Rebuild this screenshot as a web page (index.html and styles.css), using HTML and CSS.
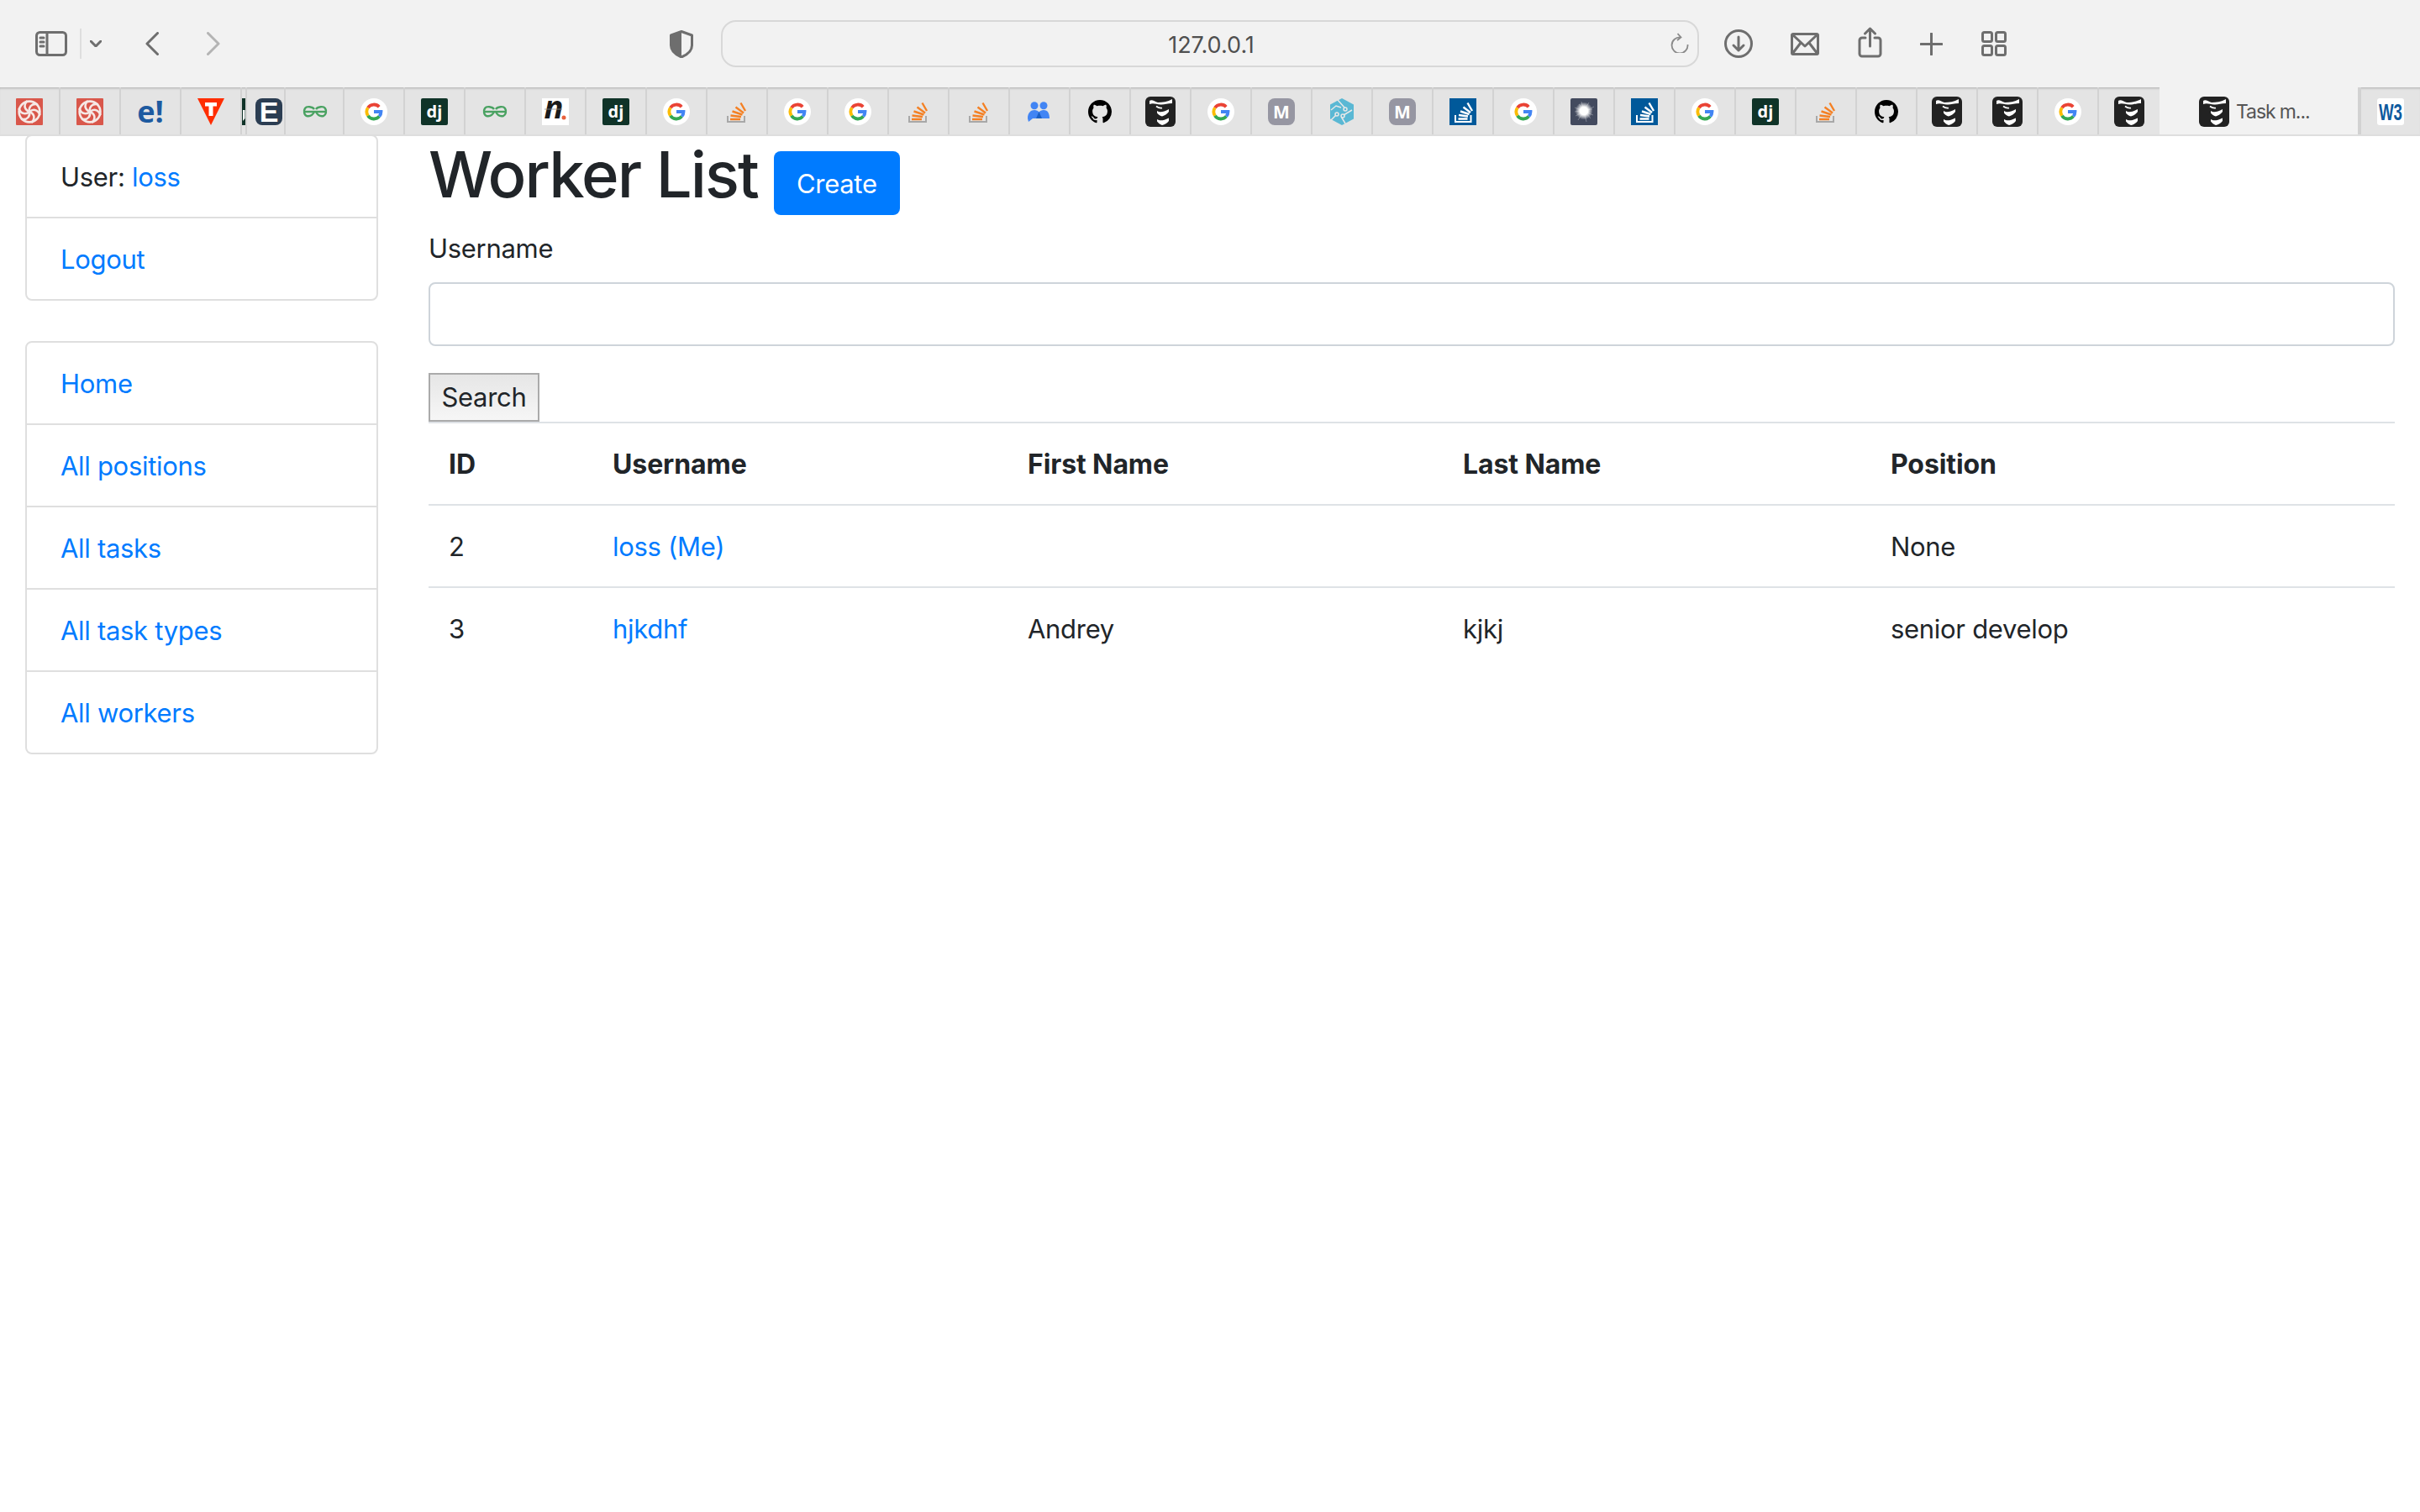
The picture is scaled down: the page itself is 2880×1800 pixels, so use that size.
FILE: index.html
```html
<!DOCTYPE html>
<html lang="en">
<head>
    <meta charset="UTF-8">
    <title>Worker List</title>
    <link rel="stylesheet" href="styles.css">
</head>
<body>
    <svg class="sprites" width="0" height="0">
        <symbol id="f-swirl" viewBox="0 0 32 32">
            <rect width="32" height="32" rx="1" fill="#d9574b"/>
            <g fill="none" stroke="#f6e9e6" stroke-width="2.600" stroke-linecap="round">
                <circle cx="16" cy="16" r="12.400"/>
                <path d="M16 16C15 11 18 6 25 7"/>
                <path d="M16 16C15 11 18 6 25 7" transform="rotate(60 16 16)"/>
                <path d="M16 16C15 11 18 6 25 7" transform="rotate(120 16 16)"/>
                <path d="M16 16C15 11 18 6 25 7" transform="rotate(180 16 16)"/>
                <path d="M16 16C15 11 18 6 25 7" transform="rotate(240 16 16)"/>
                <path d="M16 16C15 11 18 6 25 7" transform="rotate(300 16 16)"/>
            </g>
        </symbol>
        <symbol id="f-t" viewBox="0 0 32 32">
            <path d="M0 0H32L16 32Z" fill="#ff2d00"/>
            <path d="M9 5H23V9.500H18.500V21H13.500V9.500H9Z" fill="#fff"/>
        </symbol>
        <symbol id="f-gfg" viewBox="0 0 32 32">
            <g fill="none" stroke="#4aa262" stroke-width="2.400">
                <path d="M2 16H30"/>
                <path d="M15 13C13 10 6 9 4 12C2 15 3 20 6 21C10 22 13 20 15 16"/>
                <path d="M17 13C19 10 26 9 28 12C30 15 29 20 26 21C22 22 19 20 17 16"/>
            </g>
        </symbol>
        <symbol id="f-g" viewBox="0 0 32 32">
            <circle cx="16" cy="16" r="16" fill="#fff"/>
            <g fill="none" stroke-width="3.800">
                <path d="M22.200 10.200A8.500 8.500 0 0 0 8.900 11.300" stroke="#ea4335"/>
                <path d="M8.900 11.300A8.500 8.500 0 0 0 8.900 20.700" stroke="#fbbc05"/>
                <path d="M8.900 20.700A8.500 8.500 0 0 0 22.400 21.600" stroke="#34a853"/>
                <path d="M22.400 21.600A8.500 8.500 0 0 0 24.500 16H16" stroke="#4285f4"/>
            </g>
        </symbol>
        <symbol id="f-so" viewBox="0 0 32 32">
            <path d="M5 21V28H25V21" fill="none" stroke="#a8a8a8" stroke-width="2"/>
            <path d="M8 25H20M8.500 20.500L21 22M10.500 15.500L22.500 19.500M14.500 10.500L24 17.500M20.500 5.500L26 15" fill="none" stroke="#f48024" stroke-width="2.400"/>
        </symbol>
        <symbol id="f-sob" viewBox="0 0 32 32">
            <rect width="32" height="32" fill="#00599a"/>
            <path d="M7 20V28H25.500V20" fill="none" stroke="#fff" stroke-width="2"/>
            <path d="M10.500 24.500H21.500M11 20L22 21.500M13 15.500L23.500 19M16.500 10.500L25 17M21.500 5.500L27 15" fill="none" stroke="#fff" stroke-width="2.400"/>
        </symbol>
        <symbol id="f-people" viewBox="0 0 32 32">
            <circle cx="10" cy="8.700" r="4.500" fill="#4285f4"/>
            <circle cx="21" cy="8.700" r="4.500" fill="#4285f4"/>
            <path d="M2 24C2 17 6 14 10 14C12.500 14 14.500 15 15.500 16.500C16.500 15 18.500 14 21 14C26 14 28 18 28 24H8L3 28Z" fill="#4285f4"/>
            <path d="M15.500 16L19 24H12Z" fill="#1a5fc4"/>
        </symbol>
        <symbol id="f-gh" viewBox="0 0 32 32">
            <path transform="translate(2 2) scale(1.750)" d="M8 0C3.580 0 0 3.580 0 8c0 3.540 2.290 6.530 5.470 7.590.4.070.55-.17.55-.38 0-.19-.01-.82-.01-1.490-2.010.37-2.530-.49-2.690-.94-.09-.23-.48-.94-.82-1.130-.28-.15-.68-.52-.01-.53.630-.01 1.080.58 1.230.82.720 1.210 1.870.87 2.330.66.070-.52.280-.87.510-1.070-1.780-.2-3.640-.89-3.640-3.950 0-.87.310-1.590.820-2.150-.08-.2-.36-1.020.080-2.120 0 0 .67-.21 2.200.82.640-.18 1.320-.27 2-.27.680 0 1.360.09 2 .27 1.530-1.040 2.200-.82 2.200-.82.440 1.100.160 1.920.080 2.120.510.56.820 1.270.820 2.150 0 3.070-1.870 3.750-3.650 3.950.29.25.54.73.54 1.480 0 1.070-.01 1.930-.01 2.200 0 .21.150.46.550.38A8.013 8.013 0 0 0 16 8c0-4.420-3.580-8-8-8z"/>
        </symbol>
        <symbol id="f-wave" viewBox="0 0 36 36">
            <rect width="36" height="36" rx="6" fill="#222"/>
            <path d="M5 5C8 3 11 6 15 7C20 7 27 6 32 3V8C26 8 22 10 18 9.500C13 9 9 7 5 9Z" fill="#fff"/>
            <path d="M13 11.500C15 13 18 14 20 13.500" fill="none" stroke="#fff" stroke-width="1.800"/>
            <path d="M14 17C17 19 21 19 28 15V18C26 21 22 23 20 23.500C18 23 15 21 14 19.500Z" fill="#fff"/>
            <path d="M14 27C17 29 21 29 28 25.500V29C26 32 22 33.500 20 34C18 33.500 15 31 14 29.500Z" fill="#fff"/>
        </symbol>
        <symbol id="f-hex" viewBox="0 0 32 32">
            <path d="M16 0L30 7.500V24.500L16 32L2 24.500V7.500Z" fill="#5ab8d4"/>
            <g fill="none" stroke="#e8e8e8" stroke-width="1.500">
                <path d="M11 2L19 11M3 14L9 9L15 11M8.500 20.500L3 26M18 20L28 14M15.500 22.500L20 30"/>
                <circle cx="20" cy="13" r="2"/>
                <circle cx="10" cy="19" r="2"/>
                <circle cx="17" cy="21" r="2"/>
            </g>
        </symbol>
        <symbol id="f-dark" viewBox="0 0 32 32">
            <defs>
                <radialGradient id="blob">
                    <stop offset="0.450" stop-color="#fff"/>
                    <stop offset="1" stop-color="#fff" stop-opacity="0"/>
                </radialGradient>
            </defs>
            <rect width="32" height="32" rx="2" fill="#434a5e"/>
            <circle cx="16" cy="15" r="10.500" fill="url(#blob)"/>
            <path d="M5 11L27 20M9 26L22 5M6 21L28 10M13 4L19 28M5 16L26 13M10 7L24 24" stroke="#fff" stroke-width="0.500" opacity="0.600"/>
        </symbol>
    </svg>

    <header class="toolbar">
        <svg class="tool tool-sidebar" width="38" height="30" viewBox="0 0 38 30"><rect x="1.500" y="1.500" width="35" height="27" rx="4"/><path d="M14 1.500V28.500M6 8H10M6 13H10M6 18H10"/></svg>
        <span class="tool-sep"></span>
        <svg class="tool tool-menu" width="14" height="8" viewBox="0 0 14 8"><path d="M1 1L7 7L13 1"/></svg>
        <svg class="tool tool-back" width="16" height="28" viewBox="0 0 16 28"><path d="M14.500 1.500L2 14L14.500 26.500"/></svg>
        <svg class="tool tool-forward" width="16" height="28" viewBox="0 0 16 28"><path d="M1.500 1.500L14 14L1.500 26.500"/></svg>
        <svg class="tool tool-shield" width="28" height="33" viewBox="0 0 28 33"><path d="M14 1.500L26.500 6V18C26.500 25 20 29.500 14 32C8 29.500 1.500 25 1.500 18V6Z"/><path class="tool-fill" d="M14 1.500L1.500 6V18C1.500 25 8 29.500 14 32Z"/></svg>
        <div class="urlbar">
            <span class="url-text">127.0.0.1</span>
            <svg class="reload" width="22" height="24" viewBox="0 0 22 24"><path d="M12 5.500A9.500 9.500 0 1 0 20.500 14M8.500 1L12.500 5.500L8 9"/></svg>
        </div>
        <svg class="tool tool-download" width="34" height="34" viewBox="0 0 34 34"><circle cx="17" cy="17" r="15.500"/><path d="M17 9V25M11 19L17 25L23 19"/></svg>
        <svg class="tool tool-mail" width="34" height="27" viewBox="0 0 34 27"><rect x="1.500" y="1.500" width="31" height="24" rx="2"/><path d="M2 2L17 16L32 2M2 25L12 12M32 25L22 12"/></svg>
        <svg class="tool tool-share" width="29" height="37" viewBox="0 0 29 37"><path d="M9 13H5A3 3 0 0 0 2 16V32A3 3 0 0 0 5 35H24A3 3 0 0 0 27 32V16A3 3 0 0 0 24 13H20M14.500 23V2M8.500 8L14.500 2L20.500 8"/></svg>
        <svg class="tool tool-plus" width="27" height="27" viewBox="0 0 27 27"><path d="M13.500 1V26M1 13.500H26"/></svg>
        <svg class="tool tool-grid" width="30" height="30" viewBox="0 0 30 30"><rect x="1.500" y="1.500" width="11" height="11" rx="2"/><rect x="17.500" y="1.500" width="11" height="11" rx="2"/><rect x="1.500" y="17.500" width="11" height="11" rx="2"/><rect x="17.500" y="17.500" width="11" height="11" rx="2"/></svg>
    </header>

    <nav class="tabbar">
        <div class="tab"><svg class="fav"><use href="#f-swirl"/></svg></div>
        <div class="tab"><svg class="fav"><use href="#f-swirl"/></svg></div>
        <div class="tab"><svg class="fav" viewBox="0 0 32 32"><text x="16" y="29" text-anchor="middle" class="fav-text fav-eex">e!</text></svg></div>
        <div class="tab"><svg class="fav"><use href="#f-t"/></svg></div>
        <div class="tab tab-sliver"><svg class="sliver" width="4" height="32" viewBox="0 0 4 32"><rect width="4" height="32" fill="#0f3328"/><path d="M1 14H3.500V24L1 27Z" fill="#fff"/></svg></div>
        <div class="tab tab-narrow"><svg class="fav" viewBox="0 0 32 32"><rect width="32" height="32" rx="8" fill="#2b3d52"/><text x="16" y="28" text-anchor="middle" class="fav-text fav-e">E</text></svg></div>
        <div class="tab tab-70"><svg class="fav"><use href="#f-gfg"/></svg></div>
        <div class="tab"><svg class="fav"><use href="#f-g"/></svg></div>
        <div class="tab"><svg class="fav" viewBox="0 0 32 32"><rect width="32" height="32" rx="2" fill="#0f3328"/><text x="16" y="23" text-anchor="middle" class="fav-text fav-dj">dj</text></svg></div>
        <div class="tab"><svg class="fav"><use href="#f-gfg"/></svg></div>
        <div class="tab"><svg class="fav" viewBox="0 0 32 32"><rect width="32" height="32" fill="#fff"/><text x="14" y="24" text-anchor="middle" class="fav-text fav-n">n</text><path d="M3 13H24" stroke="#8a8a8a" stroke-width="0.800"/><circle cx="26" cy="23" r="2.500" fill="#e8603c"/></svg></div>
        <div class="tab"><svg class="fav" viewBox="0 0 32 32"><rect width="32" height="32" rx="2" fill="#0f3328"/><text x="16" y="23" text-anchor="middle" class="fav-text fav-dj">dj</text></svg></div>
        <div class="tab"><svg class="fav"><use href="#f-g"/></svg></div>
        <div class="tab"><svg class="fav"><use href="#f-so"/></svg></div>
        <div class="tab"><svg class="fav"><use href="#f-g"/></svg></div>
        <div class="tab"><svg class="fav"><use href="#f-g"/></svg></div>
        <div class="tab"><svg class="fav"><use href="#f-so"/></svg></div>
        <div class="tab"><svg class="fav"><use href="#f-so"/></svg></div>
        <div class="tab"><svg class="fav"><use href="#f-people"/></svg></div>
        <div class="tab"><svg class="fav"><use href="#f-gh"/></svg></div>
        <div class="tab"><svg class="fav fav-lg"><use href="#f-wave"/></svg></div>
        <div class="tab"><svg class="fav"><use href="#f-g"/></svg></div>
        <div class="tab"><svg class="fav" viewBox="0 0 32 32"><rect width="32" height="32" rx="8" fill="#9696a2"/><text x="16" y="24" text-anchor="middle" class="fav-text fav-m">M</text></svg></div>
        <div class="tab"><svg class="fav"><use href="#f-hex"/></svg></div>
        <div class="tab"><svg class="fav" viewBox="0 0 32 32"><rect width="32" height="32" rx="8" fill="#9696a2"/><text x="16" y="24" text-anchor="middle" class="fav-text fav-m">M</text></svg></div>
        <div class="tab"><svg class="fav"><use href="#f-sob"/></svg></div>
        <div class="tab"><svg class="fav"><use href="#f-g"/></svg></div>
        <div class="tab"><svg class="fav"><use href="#f-dark"/></svg></div>
        <div class="tab"><svg class="fav"><use href="#f-sob"/></svg></div>
        <div class="tab"><svg class="fav"><use href="#f-g"/></svg></div>
        <div class="tab"><svg class="fav" viewBox="0 0 32 32"><rect width="32" height="32" rx="2" fill="#0f3328"/><text x="16" y="23" text-anchor="middle" class="fav-text fav-dj">dj</text></svg></div>
        <div class="tab"><svg class="fav"><use href="#f-so"/></svg></div>
        <div class="tab"><svg class="fav"><use href="#f-gh"/></svg></div>
        <div class="tab"><svg class="fav fav-lg"><use href="#f-wave"/></svg></div>
        <div class="tab"><svg class="fav fav-lg"><use href="#f-wave"/></svg></div>
        <div class="tab"><svg class="fav"><use href="#f-g"/></svg></div>
        <div class="tab tab-before-active"><svg class="fav fav-lg"><use href="#f-wave"/></svg></div>
        <div class="tab tab-active"><svg class="fav fav-lg"><use href="#f-wave"/></svg><span class="tab-title">Task m...</span></div>
        <div class="tab tab-last"><svg class="fav" viewBox="0 0 32 32"><rect width="32" height="32" rx="3" fill="#fff"/><text x="16" y="26" text-anchor="middle" textLength="28" lengthAdjust="spacingAndGlyphs" class="fav-text fav-w3">W3</text></svg></div>
    </nav>

    <div class="page">
        <aside class="sidebar">
            <ul class="list-group">
                <li class="list-item">User: <a href="#">loss</a></li>
                <li class="list-item"><a href="#">Logout</a></li>
            </ul>
            <ul class="list-group">
                <li class="list-item"><a href="#">Home</a></li>
                <li class="list-item"><a href="#">All positions</a></li>
                <li class="list-item"><a href="#">All tasks</a></li>
                <li class="list-item"><a href="#">All task types</a></li>
                <li class="list-item"><a href="#">All workers</a></li>
            </ul>
        </aside>

        <main class="content">
            <div class="title-row">
                <h1 class="page-title">Worker List</h1>
                <a href="#" class="btn-create">Create</a>
            </div>
            <form class="search-form">
                <label class="field-label" for="username">Username</label>
                <input class="field-input" type="text" id="username" name="username">
                <button class="btn-search" type="button">Search</button>
            </form>
            <table class="worker-table">
                <thead>
                    <tr>
                        <th class="col-id">ID</th>
                        <th class="col-user">Username</th>
                        <th class="col-first">First Name</th>
                        <th class="col-last">Last Name</th>
                        <th>Position</th>
                    </tr>
                </thead>
                <tbody>
                    <tr>
                        <td>2</td>
                        <td><a href="#">loss (Me)</a></td>
                        <td></td>
                        <td></td>
                        <td>None</td>
                    </tr>
                    <tr>
                        <td>3</td>
                        <td><a href="#">hjkdhf</a></td>
                        <td>Andrey</td>
                        <td>kjkj</td>
                        <td>senior develop</td>
                    </tr>
                </tbody>
            </table>
        </main>
    </div>
</body>
</html>
```

FILE: styles.css
```css
* {
    box-sizing: border-box;
}
body {
    margin: 0;
    background: #fff;
    color: #212529;
    font-family: Inter, "Liberation Sans", sans-serif;
    font-size: 31px;
    letter-spacing: -0.3px;
    line-height: 48px;
}
a {
    color: #007bff;
    text-decoration: none;
}
.sprites {
    position: absolute;
}

/* browser chrome */
.toolbar {
    display: flex;
    align-items: center;
    height: 104px;
    padding-left: 42px;
    background: #f2f2f2;
}
.tool {
    flex: none;
    fill: none;
    stroke: #6e6e6e;
    stroke-width: 3;
    stroke-linecap: round;
    stroke-linejoin: round;
}
.tool-fill {
    fill: #6e6e6e;
    stroke: none;
}
.tool-sep {
    width: 2px;
    height: 36px;
    margin-left: 15px;
    background: #dedede;
}
.tool-menu { margin-left: 10px; }
.tool-back { margin-left: 52px; }
.tool-forward { margin-left: 57px; stroke: #b4b4b4; }
.tool-shield { margin-left: 535px; }
.tool-download { margin-left: 30px; }
.tool-mail { margin-left: 45px; }
.tool-share { margin-left: 46px; margin-bottom: 3px; }
.tool-plus { margin-left: 45px; }
.tool-grid { margin-left: 46px; }
.urlbar {
    display: flex;
    align-items: center;
    justify-content: center;
    position: relative;
    width: 1164px;
    height: 56px;
    margin-left: 33px;
    padding: 3px 0 0 3px;
    border: 2px solid #d8d8d8;
    border-radius: 18px;
    background: #f2f2f2;
}
.url-text {
    font-size: 27px;
    letter-spacing: 0;
    color: #4f4f4f;
}
.reload {
    position: absolute;
    right: 10px;
    top: 13px;
    fill: none;
    stroke: #8a8a8a;
    stroke-width: 1.800;
}

/* tabs */
.tabbar {
    display: flex;
    position: relative;
    z-index: 1;
    height: 56px;
    background: #e4e4e4;
    box-shadow: inset 0 3px 3px -2px rgba(0, 0, 0, 0.25), 0 2px 0 #dedede;
}
.tab {
    display: flex;
    flex: none;
    align-items: center;
    justify-content: center;
    width: 72px;
    padding-top: 2px;
    border-right: 2px solid #d2d2d2;
}
.tab-sliver {
    justify-content: flex-start;
    width: 6px;
}
.tab-narrow {
    justify-content: flex-start;
    width: 46px;
    padding-left: 10px;
}
.tab-70 {
    width: 70px;
    padding-left: 2px;
}
.tab-before-active { border-right: 0; }
.tab-active {
    justify-content: flex-start;
    width: 238px;
    padding-left: 47px;
    background: #f2f2f2;
}
.tab-last {
    border-right: 0;
    border-left: 2px solid #d2d2d2;
}
.tab-title {
    margin-left: 8px;
    font-size: 23px;
    letter-spacing: -1.1px;
    color: #555;
    white-space: nowrap;
}
.fav {
    flex: none;
    width: 32px;
    height: 32px;
    overflow: visible;
}
.fav-lg {
    width: 36px;
    height: 36px;
}
.sliver {
    flex: none;
}
.fav-text {
    font-family: "Open Sans", "Liberation Sans", sans-serif;
    font-weight: 700;
    letter-spacing: 0;
}
.fav-eex { font-size: 36px; fill: #1d5aa0; }
.fav-e { font-family: "Liberation Sans", sans-serif; font-size: 34px; fill: #fff; }
.fav-dj { font-size: 20px; fill: #fff; }
.fav-n { font-size: 38px; font-style: italic; fill: #1a1a1a; }
.fav-m { font-size: 21px; fill: #fff; }
.fav-w3 { font-family: "Liberation Sans", sans-serif; font-size: 27px; fill: #0e5a9e; }

/* page */
.page {
    display: flex;
    align-items: flex-start;
    gap: 60px;
    padding: 0 30px;
}
.sidebar {
    flex: none;
    width: 420px;
}
.list-group {
    margin: 0 0 48px;
    padding: 0;
    list-style: none;
}
.list-item {
    margin-top: -2px;
    padding: 25px 40px 23px;
    border: 2px solid #dfdfdf;
}
.list-item:first-child {
    margin-top: 0;
    border-radius: 8px 8px 0 0;
}
.list-item:last-child {
    border-radius: 0 0 8px 8px;
}
.content {
    flex: 1;
}
.title-row {
    display: flex;
    align-items: flex-end;
    gap: 19px;
    height: 96px;
    margin-bottom: 16px;
}
.page-title {
    margin: 0;
    font-size: 76px;
    font-weight: 500;
    letter-spacing: -1.9px;
    line-height: 98px;
}
.btn-create {
    padding: 15px 27px 13px;
    border-radius: 8px;
    background: #007bff;
    color: #fff;
}
.field-label {
    display: block;
    margin-bottom: 16px;
}
.field-input {
    display: block;
    width: 100%;
    height: 76px;
    margin-bottom: 32px;
    border: 2px solid #ced4da;
    border-radius: 8px;
    background: #fff;
}
.btn-search {
    display: block;
    width: 132px;
    height: 58px;
    padding: 0;
    border: 2px solid #aaa;
    background: linear-gradient(#e6e6e6, #f6f6f6);
    color: #212529;
    font: inherit;
    letter-spacing: inherit;
    line-height: 54px;
}
.worker-table {
    width: 100%;
    border-collapse: collapse;
    table-layout: fixed;
}
.worker-table th,
.worker-table td {
    height: 98px;
    padding: 25px 24px 23px;
    border-top: 2px solid #dee2e6;
    text-align: left;
    vertical-align: top;
}
.worker-table th {
    font-size: 32px;
    font-weight: 700;
    letter-spacing: -0.1px;
}
.col-id { width: 195px; }
.col-user { width: 494px; }
.col-first { width: 518px; }
.col-last { width: 509px; }
```
